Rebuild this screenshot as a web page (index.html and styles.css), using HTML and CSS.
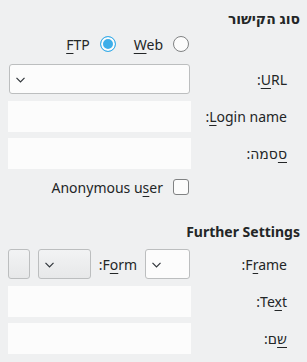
FILE: index.html
```html
<!DOCTYPE html>
<html lang="he" dir="rtl">
<head>
    <meta charset="UTF-8">
    <meta name="viewport" content="width=device-width, initial-scale=1.0">
    <title>קישור</title>
    <link rel="stylesheet" href="styles.css">
</head>
<body>
    <div class="dialog">
        <h2 class="group-title">סוג הקישור</h2>
        <div class="form">
            <div></div>
            <div class="radios">
                <label class="radio-item"><span class="radio"></span><span><u>W</u>eb</span></label>
                <label class="radio-item"><span class="radio checked"></span><span><u>F</u>TP</span></label>
            </div>

            <div class="label"><span dir="ltr"><u>U</u>RL</span>:</div>
            <div class="combo editable wide">
                <svg class="arrow" width="9" height="6" viewBox="0 0 9 6"><polyline points="0.5,0.8 4.5,4.8 8.5,0.8" fill="none" stroke="#31363b" stroke-width="1.2"/></svg>
            </div>

            <div class="label"><span dir="ltr"><u>L</u>ogin name</span>:</div>
            <div class="input"></div>

            <div class="label"><u>ס</u>סמה:</div>
            <div class="input"></div>

            <div></div>
            <label class="check-item"><span class="checkbox"></span><span dir="ltr">Anonymous u<u>s</u>er</span></label>
        </div>

        <h2 class="group-title second">Further Settings</h2>
        <div class="form second">
            <div class="label"><span dir="ltr">F<u>r</u>ame</span>:</div>
            <div class="frame-row">
                <div class="combo editable small">
                    <svg class="arrow" width="9" height="6" viewBox="0 0 9 6"><polyline points="0.5,0.8 4.5,4.8 8.5,0.8" fill="none" stroke="#31363b" stroke-width="1.2"/></svg>
                </div>
                <div class="inline-label"><span dir="ltr">F<u>o</u>rm</span>:</div>
                <div class="combo button-combo">
                    <svg class="arrow" width="9" height="6" viewBox="0 0 9 6"><polyline points="0.5,0.8 4.5,4.8 8.5,0.8" fill="none" stroke="#31363b" stroke-width="1.2"/></svg>
                </div>
                <div class="tool-button"></div>
            </div>

            <div class="label"><span dir="ltr">Te<u>x</u>t</span>:</div>
            <div class="input"></div>

            <div class="label"><u>ש</u>ם:</div>
            <div class="input"></div>
        </div>
    </div>
</body>
</html>
```

FILE: styles.css
```css
body {
    margin: 0;
    background: #eff0f1;
    color: #232627;
    font-family: "Noto Sans", "DejaVu Sans", sans-serif;
    font-size: 14px;
}
.dialog {
    padding: 10px 7px 0 8px;
}
.group-title {
    margin: 0;
    font-size: 14px;
    font-weight: bold;
    line-height: 18px;
}
.group-title.second {
    margin-top: 24px;
}
.form {
    display: grid;
    grid-template-columns: 96px 183px;
    padding-right: 13px;
    row-gap: 6px;
    align-items: center;
}
.form.second {
    margin-top: 8px;
}
.label {
    text-align: right;
    white-space: nowrap;
}
u {
    text-decoration-thickness: 1px;
    text-underline-offset: 3px;
}
.radios {
    display: flex;
    gap: 18px;
    height: 28px;
    align-items: center;
    padding-right: 2px;
    margin-top: 2px;
}
.radio-item, .check-item {
    display: flex;
    align-items: center;
    gap: 10px;
}
.check-item {
    padding-right: 2px;
    height: 24px;
}
.radio {
    width: 14px;
    height: 14px;
    border: 1px solid #808283;
    border-radius: 50%;
    background: #fcfcfc;
}
.radio.checked {
    border-color: #3daee9;
    background: #3daee9;
    box-shadow: inset 0 0 0 2px #fcfcfc;
}
.checkbox {
    width: 14px;
    height: 14px;
    border: 1px solid #808283;
    border-radius: 3px;
    background: #fcfcfc;
}
.input {
    height: 31px;
    background: #fcfcfc;
}
.combo {
    position: relative;
    height: 28px;
    border: 1px solid #bcbebf;
    border-radius: 3px;
    background: #fcfcfc;
}
.combo.wide {
    margin: 0 1px 1px 1px;
}
.arrow {
    position: absolute;
    left: 6px;
    top: 12px;
}
.frame-row {
    display: flex;
    align-items: flex-start;
    gap: 8px;
    height: 31px;
    padding-right: 1px;
}
.frame-row .inline-label {
    align-self: center;
    margin-top: -1px;
}
.combo.small {
    width: 43px;
}
.button-combo {
    width: 51px;
    background: linear-gradient(#f2f3f4, #e7e8e9);
}
.inline-label {
    white-space: nowrap;
}
.tool-button {
    width: 20px;
    height: 28px;
    border: 1px solid #bcbebf;
    border-radius: 3px;
    background: linear-gradient(#f2f3f4, #e7e8e9);
}
```
